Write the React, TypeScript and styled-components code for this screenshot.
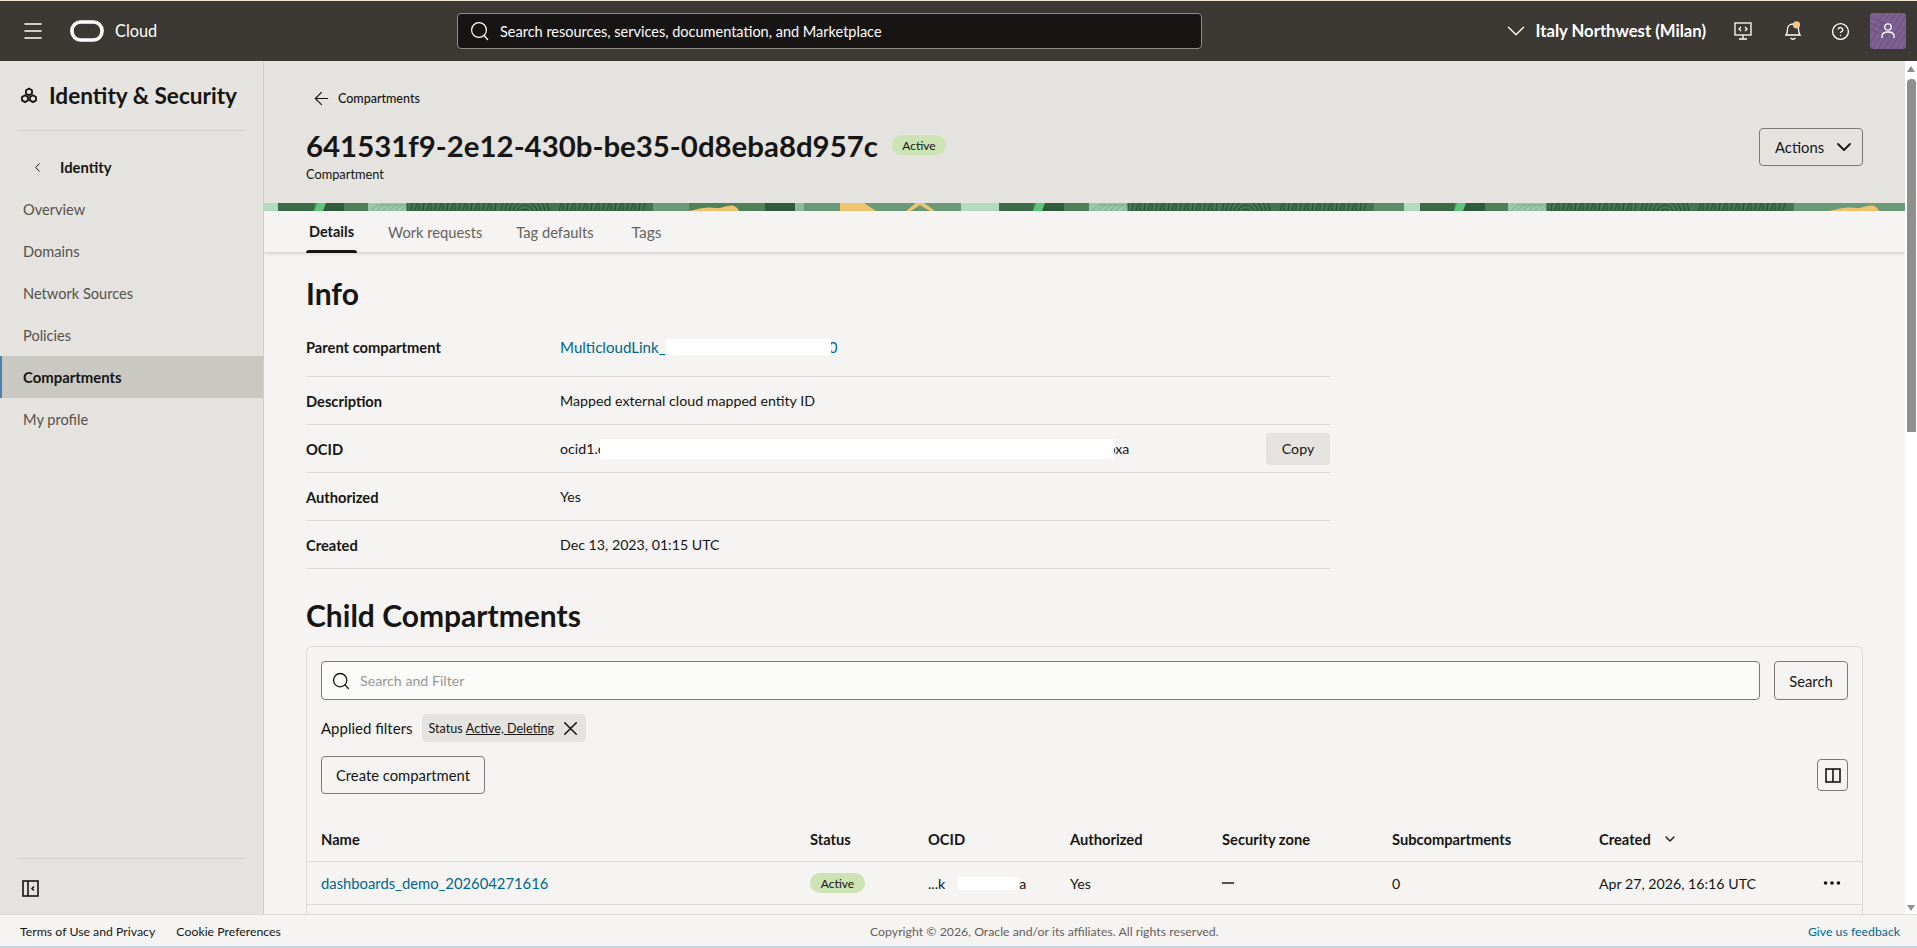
import styled, { createGlobalStyle } from 'styled-components'
import { ArrowLeft, ChevronDown, ChevronLeft, CircleHelp, Ellipsis, Menu, Search, X } from 'lucide-react'

const GlobalStyle = createGlobalStyle`
  * {
    margin: 0;
    padding: 0;
    box-sizing: border-box;
  }

  html, body {
    height: 100%;
    overflow: hidden;
  }

  body {
    background-color: #f5f4f2;
    color: #161513;
    font-family: 'Lato', 'Noto Sans', sans-serif;
    font-size: 14.2px;
  }
`

const Page = styled.div`
  height: 100vh;
  display: flex;
  flex-direction: column;
  border-top: 1px solid #efe6d2;
  border-bottom: 2px solid #c4d4dc;
`

const Header = styled.header`
  height: 60px;
  flex: none;
  display: flex;
  align-items: center;
  background-color: #3c3833;
  color: #fff;
`

const MenuButton = styled.div`
  width: 24px;
  margin-left: 21px;
  display: flex;
`

const Logo = styled.svg`
  width: 34px;
  height: 22px;
  margin-left: 25px;
`

const CloudLabel = styled.span`
  margin: 0 0 2px 11px;
  font-size: 16.3px;
  width: 342px;
`

const SearchBox = styled.div`
  width: 745px;
  height: 36px;
  display: flex;
  align-items: center;
  gap: 10px;
  padding-left: 12px;
  background-color: #161513;
  border: 1px solid #8f8c87;
  border-radius: 4px;
  font-size: 14.5px;
`

const HeaderRight = styled.div`
  margin-left: auto;
  display: flex;
  align-items: center;
`

const Region = styled.div`
  display: flex;
  align-items: center;
  gap: 5px;
  font-size: 16.7px;
  font-weight: 700;
  margin-right: 28px;
`

const HeaderIcon = styled.div<{ $gap: number }>`
  display: flex;
  margin-right: ${props => props.$gap}px;
`

const Avatar = styled.div`
  width: 36px;
  height: 36px;
  margin-right: 11px;
  border-radius: 3px;
  overflow: hidden;
  display: flex;
`

const Body = styled.div`
  flex: 1;
  min-height: 0;
  display: flex;
`

const Sidebar = styled.aside`
  width: 264px;
  flex: none;
  display: flex;
  flex-direction: column;
  background-color: #e4e3df;
  border-right: 1px solid #cfcdc8;
`

const SideTitle = styled.div`
  height: 70px;
  margin: 0 18px;
  display: flex;
  align-items: center;
  gap: 11px;
  padding-left: 2px;
  border-bottom: 1px solid #cfcdc8;
  font-size: 22.6px;
  font-weight: 700;
`

const SideBack = styled.div`
  height: 42px;
  margin-top: 15px;
  display: flex;
  align-items: center;
  gap: 15px;
  padding-left: 30px;
  font-size: 14.8px;
  font-weight: 700;
`

const NavItem = styled.div<{ $active?: boolean }>`
  height: 42px;
  display: flex;
  align-items: center;
  padding-left: ${props => props.$active ? 21 : 23}px;
  color: ${props => props.$active ? '#161513' : '#55514c'};
  font-size: ${props => props.$active ? 14.9 : 14.6}px;
  font-weight: ${props => props.$active ? 700 : 400};
  background-color: ${props => props.$active ? '#cac8c3' : 'transparent'};
  border-left: ${props => props.$active ? '2px solid #4f7fa8' : 'none'};
`

const SideBottom = styled.div`
  margin: auto 18px 0;
  height: 56px;
  padding: 21px 0 0 4px;
  border-top: 1px solid #cfcdc8;
  display: flex;
  align-items: flex-start;
`

const Main = styled.main`
  flex: 1;
  min-width: 0;
  display: flex;
  flex-direction: column;
  overflow: hidden;
`

const TitleArea = styled.div`
  height: 142px;
  flex: none;
  display: flex;
  justify-content: space-between;
  padding: 27px 42px 0;
  background-color: #e4e3df;
`

const BackLink = styled.div`
  height: 20px;
  display: flex;
  align-items: center;
  gap: 6px;
  margin-left: 5px;
  font-size: 12.5px;
  font-weight: 500;
`

const TitleRow = styled.div`
  height: 40px;
  margin-top: 17px;
  margin-bottom: 1px;
  display: flex;
  align-items: center;
  gap: 14px;
`

const PageTitle = styled.h1`
  font-size: 29.4px;
  font-weight: 700;
`

const Subtitle = styled.div`
  height: 16px;
  line-height: 16px;
  font-size: 12.8px;
`

const Badge = styled.span<{ $w: number }>`
  width: ${props => props.$w}px;
  height: 20px;
  display: flex;
  align-items: center;
  justify-content: center;
  background-color: #cce3b4;
  border-radius: 10px;
  font-size: 12px;
`

const Button = styled.button`
  display: flex;
  align-items: center;
  justify-content: center;
  background: transparent;
  border: 1px solid #7c7a76;
  border-radius: 4px;
  font-family: inherit;
  font-size: 14.8px;
  color: #161513;
`

const ActionsButton = styled(Button)`
  width: 104px;
  height: 38px;
  margin-top: 40px;
  justify-content: flex-start;
  gap: 8px;
  padding-left: 15px;
`

const Banner = styled.svg`
  display: block;
  width: 100%;
  height: 8px;
  flex: none;
`

const Tabs = styled.nav`
  height: 42px;
  flex: none;
  display: flex;
  gap: 28px;
  padding-left: 42px;
  border-bottom: 1px solid #dcdad6;
  box-shadow: 0 1px 3px rgba(0, 0, 0, 0.12);
  background-color: #f5f4f2;
`

const Tab = styled.div<{ $active?: boolean }>`
  position: relative;
  padding: 0 3px;
  display: flex;
  align-items: center;
  font-size: ${props => props.$active ? 14.5 : 14.7}px;
  color: ${props => props.$active ? '#161513' : '#65615c'};
  font-weight: ${props => props.$active ? 700 : 400};

  &:last-child {
    margin-left: 4px;
    font-size: 15.5px;
  }

  &::after {
    content: '';
    display: ${props => props.$active ? 'block' : 'none'};
    position: absolute;
    left: 0;
    right: 0;
    bottom: -1px;
    height: 3px;
    background-color: #161513;
    border-radius: 3px 3px 0 0;
  }
`

const Content = styled.div`
  flex: 1;
  min-height: 0;
  overflow: hidden;
  padding: 20px 42px 0;
`

const SectionTitle = styled.h2`
  height: 40px;
  line-height: 40px;
  font-size: 30px;
  font-weight: 700;
`

const InfoList = styled.div`
  width: 1024px;
  margin-top: 16px;
`

const InfoRow = styled.div`
  height: 48px;
  display: flex;
  align-items: center;
  border-bottom: 1px solid #dcdad6;

  &:first-child {
    padding-bottom: 11px;
  }
`

const InfoLabel = styled.div`
  width: 254px;
  flex: none;
  font-size: 14.7px;
  font-weight: 700;
`

const InfoValue = styled.div`
  display: flex;
  align-items: center;
  flex: 1;
`

const Link = styled.span`
  color: #00688c;
  font-size: 15.1px;
`

const RowLink = styled(Link)`
  font-size: 14.8px;
`

// covers what was blanked out in the screenshot, so it sits a little over its neighbours
const RedactBar = styled.span<{ $w: number; $h: number; $before?: number; $after?: number }>`
  position: relative;
  display: inline-block;
  width: ${props => props.$w}px;
  height: ${props => props.$h}px;
  margin-left: ${props => props.$before || 0}px;
  margin-right: ${props => props.$after || 0}px;
  background-color: #fff;
`

const CopyButton = styled.div`
  width: 64px;
  height: 32px;
  margin-left: auto;
  display: flex;
  align-items: center;
  justify-content: center;
  background-color: #e4e3df;
  border-radius: 4px;
`

const ChildTitle = styled(SectionTitle)`
  margin-top: 26px;
`

const Card = styled.section`
  margin-top: 11px;
  border: 1px solid #dcdad6;
  border-bottom: none;
  border-radius: 6px 6px 0 0;
`

const CardTop = styled.div`
  display: flex;
  flex-direction: column;
  gap: 14px;
  padding: 14px 14px 0;
`

const SearchRow = styled.div`
  display: flex;
  gap: 14px;
`

const FilterInput = styled.div`
  flex: 1;
  height: 39px;
  display: flex;
  align-items: center;
  gap: 9px;
  padding-left: 9px;
  color: #9a9793;
  background-color: #fbfbfa;
  border: 1px solid #7c7a76;
  border-radius: 4px;
`

const SearchButton = styled(Button)`
  width: 74px;
  height: 39px;
`

const FilterRow = styled.div`
  height: 28px;
  display: flex;
  align-items: center;
  gap: 9px;
  font-size: 15px;
`

const FilterLabel = styled.span`
  margin-bottom: 1px;
`

const Chip = styled.div`
  height: 28px;
  width: 164px;
  display: flex;
  align-items: center;
  gap: 3px;
  padding-left: 7px;
  background-color: #e4e3df;
  border-radius: 4px;
  font-size: 12.6px;
`

const ChipValue = styled.span`
  text-decoration: underline;
`

const ChipClose = styled.span`
  margin-left: auto;
  margin-right: 4px;
  display: flex;
`

const ToolRow = styled.div`
  display: flex;
  align-items: center;
  justify-content: space-between;
`

const CreateButton = styled(Button)`
  width: 164px;
  height: 38px;
`

const ColumnsButton = styled(Button)`
  width: 31px;
  height: 32px;
`

const TableRow = styled.div`
  display: grid;
  grid-template-columns: 489px 118px 142px 152px 170px 207px 222px 1fr;
  align-items: center;
  height: 43px;
  padding-left: 14px;
  border-bottom: 1px solid #dcdad6;
`

const TableHead = styled(TableRow)`
  height: 45px;
  margin-top: 23px;
  font-size: 14.7px;
  font-weight: 700;
`

const SortCell = styled.div`
  display: flex;
  align-items: center;
  gap: 11px;
`

const OcidCell = styled.div`
  display: flex;
  align-items: center;
`

const Dash = styled.div`
  width: 12px;
  height: 2px;
  background-color: #55514c;
`

const DotsCell = styled.div`
  display: flex;
`

const Scrollbar = styled.div`
  width: 12px;
  flex: none;
  display: flex;
  flex-direction: column;
  align-items: center;
  background-color: #fff;
  padding-top: 5px;
`

const ScrollArrow = styled.div<{ $down?: boolean }>`
  width: 0;
  height: 0;
  border-left: 4px solid transparent;
  border-right: 4px solid transparent;
  border-bottom: ${props => props.$down ? 'none' : '6px solid #8f8f8f'};
  border-top: ${props => props.$down ? '6px solid #8f8f8f' : 'none'};
  margin-top: ${props => props.$down ? 'auto' : 0};
  margin-bottom: ${props => props.$down ? '3px' : 0};
`

const ScrollThumb = styled.div`
  width: 9px;
  height: 353px;
  margin-top: 7px;
  background-color: #8f8f8f;
  border-radius: 4px 4px 0 0;
`

const Footer = styled.footer`
  height: 32px;
  flex: none;
  display: flex;
  align-items: center;
  padding: 1px 17px 0 20px;
  background-color: #f5f4f2;
  border-top: 1px solid #dcdad6;
  font-size: 12.3px;
`

const FooterLinks = styled.div`
  display: flex;
  gap: 21px;
  width: 850px;
`

const Copyright = styled.div`
  color: #65615c;
`

const Feedback = styled.span`
  margin-left: auto;
  color: #00688c;
`

// green band under the title: hand placed pieces, x is from the left edge of the main column
const bandPieces: [number, number, string][] = [
  [0, 1641, '#4f8059'],
  [0, 14, '#b4dabf'],
  [14, 36, '#3c6b48'],
  [59, 21, '#2f5a3c'],
  [80, 24, '#4d7f59'],
  [389, 36, '#6b9a78'],
  [501, 30, '#2f5a3c'],
  [531, 9, '#8dbb9b'],
  [540, 157, '#6b9a78'],
  [697, 38, '#b4dabf'],
  [735, 34, '#3c6b48'],
  [778, 22, '#2f5a3c'],
  [800, 24, '#4d7f59'],
  [1110, 30, '#5d8e6a'],
  [1140, 16, '#b4dabf'],
  [1156, 34, '#3c6b48'],
  [1199, 22, '#2f5a3c'],
  [1221, 23, '#4d7f59'],
  [1530, 111, '#6b9a78'],
]

const stripes = [50, 769, 1190]
const prints = [143, 864, 1283]

function Fingerprint({ x }: { x: number }) {
  const lines = Array.from({ length: 60 }, (_, i) => i * 4)
  return (
    <g>
      <rect x={x - 39} width={39} height={8} fill="#9cc7a8" />
      {[0, 6, 12, 18, 24, 30].map(d => (
        <path key={d} d={`M${x - 36 + d} 8 Q${x - 30 + d} 0 ${x - 22 + d} 2`} stroke="#6f9f7e" fill="none" strokeWidth="0.7" />
      ))}
      <rect x={x} width={246} height={8} fill="#44744f" />
      {lines.map(l => (
        <path
          key={l}
          d={`M${x + l} 8 L${x + l + (l % 12) / 4} 0`}
          stroke="#23482f"
          strokeWidth="1"
          opacity={l > 90 && l < 150 ? 0 : 0.85}
        />
      ))}
      {[4, 8, 12, 16, 20, 24].map(r => (
        <circle key={r} cx={x + 118} cy={10} r={r} stroke="#23482f" fill="none" strokeWidth="1" />
      ))}
    </g>
  )
}

function BandArt() {
  return (
    <Banner viewBox="0 0 1641 8" preserveAspectRatio="none">
      {bandPieces.map(([x, w, c]) => <rect key={x} x={x} width={w} height={8} fill={c} />)}
      {stripes.map(x => <polygon key={x} points={`${x + 3},0 ${x + 12},0 ${x + 9},8 ${x},8`} fill="#5ec47c" />)}
      {prints.map(x => <Fingerprint key={x} x={x} />)}
      <path d="M425 8 C440 4 446 4 452 5 C458 6 464 1 470 3 C473 4 474 6 475 8 Z" fill="#f0c572" />
      <polygon points="576,0 600,0 612,8 576,8" fill="#f0c572" />
      <path d="M642 8 L652 0 L660 0 L671 8 L666 8 L656 2 L647 8 Z" fill="#f0c572" />
      <path d="M1565 8 C1580 4 1586 4 1592 5 C1598 6 1604 1 1610 3 C1613 4 1614 6 1615 8 Z" fill="#f0c572" />
    </Banner>
  )
}

function AvatarArt() {
  return (
    <svg width="36" height="36" viewBox="0 0 36 36">
      <rect width="36" height="36" fill="#7e6191" />
      {[0, 6, 12, 18, 24, 30, 36, 42].map(d => (
        <path key={d} d={`M${d - 10} 36 L${d + 14} 0`} stroke="#68507a" strokeWidth="1" />
      ))}
      {[4, 10, 16].map(d => (
        <path key={d} d={`M0 ${d} L18 ${d + 8}`} stroke="#68507a" strokeWidth="1" />
      ))}
      <circle cx="18" cy="14" r="3.2" fill="none" stroke="#fff" strokeWidth="1.3" />
      <path d="M12 25 V23 C12 20 15 19 18 19 C21 19 24 20 24 23 V25" fill="none" stroke="#fff" strokeWidth="1.3" />
    </svg>
  )
}

function App() {
  return (
    <>
      <GlobalStyle />
      <Page>
        <Header>
          <MenuButton><Menu size={24} strokeWidth={1.6} /></MenuButton>
          <Logo viewBox="0 0 34 22">
            <rect x="2" y="2" width="30" height="18" rx="8.5" fill="none" stroke="#fff" strokeWidth="3.6" />
          </Logo>
          <CloudLabel>Cloud</CloudLabel>
          <SearchBox>
            <svg width="20" height="20" viewBox="0 0 20 20" fill="none" stroke="#fff" strokeWidth="1.2">
              <circle cx="9" cy="9" r="7.4" />
              <path d="M14.2 14.5 L18 19" />
            </svg>
            Search resources, services, documentation, and Marketplace
          </SearchBox>
          <HeaderRight>
            <Region>
              <ChevronDown size={30} strokeWidth={1.1} />
              Italy Northwest (Milan)
            </Region>
            <HeaderIcon $gap={32}>
              <svg width="18" height="18" viewBox="0 0 18 18" fill="none" stroke="#fff" strokeWidth="1.3">
                <rect x="1" y="1" width="16" height="12" />
                <path d="M9 13 V16.5 M5 17 H13" />
                <path d="M7 5 L5 7 L7 9 M11 5 L13 7 L11 9" />
              </svg>
            </HeaderIcon>
            <HeaderIcon $gap={29}>
              <svg width="18" height="20" viewBox="0 0 18 20" fill="none" stroke="#fff" strokeWidth="1.3">
                <path d="M2 14 C3.5 12 3.5 10 3.5 8 C3.5 5 6 3 9 3 C12 3 14.5 5 14.5 8 C14.5 10 14.5 12 16 14 Z" />
                <path d="M6.5 17 C8 18.5 10 18.5 11.5 17" />
                <circle cx="12.5" cy="3.8" r="3.6" fill="#f0c98a" stroke="none" />
              </svg>
            </HeaderIcon>
            <HeaderIcon $gap={20}><CircleHelp size={19} strokeWidth={1.7} /></HeaderIcon>
            <Avatar><AvatarArt /></Avatar>
          </HeaderRight>
        </Header>

        <Body>
          <Sidebar>
            <SideTitle>
              <svg width="18" height="18" viewBox="0 0 18 18" fill="none" stroke="#161513" strokeWidth="1.8" strokeLinejoin="round">
                <path d="M9 1.5 L12 3.2 V6.6 L9 8.3 L6 6.6 V3.2 Z" />
                <path d="M5 8.3 L8 10 V13.4 L5 15.1 L2 13.4 V10 Z" />
                <path d="M13 8.3 L16 10 V13.4 L13 15.1 L10 13.4 V10 Z" />
              </svg>
              Identity &amp; Security
            </SideTitle>
            <SideBack>
              <ChevronLeft size={15} strokeWidth={1.6} />
              Identity
            </SideBack>
            <NavItem>Overview</NavItem>
            <NavItem>Domains</NavItem>
            <NavItem>Network Sources</NavItem>
            <NavItem>Policies</NavItem>
            <NavItem $active>Compartments</NavItem>
            <NavItem>My profile</NavItem>
            <SideBottom>
              <svg width="17" height="17" viewBox="0 0 17 17" fill="none" stroke="#161513" strokeWidth="1.6">
                <rect x="1" y="1" width="15" height="15" />
                <path d="M6 1 V16" />
                <path d="M12 6.5 L10 8.5 L12 10.5" />
              </svg>
            </SideBottom>
          </Sidebar>

          <Main>
            <TitleArea>
              <div>
                <BackLink>
                  <ArrowLeft size={21} strokeWidth={1.3} />
                  Compartments
                </BackLink>
                <TitleRow>
                  <PageTitle>641531f9-2e12-430b-be35-0d8eba8d957c</PageTitle>
                  <Badge $w={54}>Active</Badge>
                </TitleRow>
                <Subtitle>Compartment</Subtitle>
              </div>
              <ActionsButton>
                Actions
                <ChevronDown size={24} strokeWidth={1.8} />
              </ActionsButton>
            </TitleArea>
            <BandArt />
            <Tabs>
              <Tab $active>Details</Tab>
              <Tab>Work requests</Tab>
              <Tab>Tag defaults</Tab>
              <Tab>Tags</Tab>
            </Tabs>
            <Content>
              <SectionTitle>Info</SectionTitle>
              <InfoList>
                <InfoRow>
                  <InfoLabel>Parent compartment</InfoLabel>
                  <InfoValue>
                    <Link>MulticloudLink_</Link>
                    <RedactBar $w={165} $h={16} $after={-2} />
                    <Link>0</Link>
                  </InfoValue>
                </InfoRow>
                <InfoRow>
                  <InfoLabel>Description</InfoLabel>
                  <InfoValue>Mapped external cloud mapped entity ID</InfoValue>
                </InfoRow>
                <InfoRow>
                  <InfoLabel>OCID</InfoLabel>
                  <InfoValue>
                    ocid1.c
                    <RedactBar $w={514} $h={20} $before={-5} $after={-6} />
                    oxa
                    <CopyButton>Copy</CopyButton>
                  </InfoValue>
                </InfoRow>
                <InfoRow>
                  <InfoLabel>Authorized</InfoLabel>
                  <InfoValue>Yes</InfoValue>
                </InfoRow>
                <InfoRow>
                  <InfoLabel>Created</InfoLabel>
                  <InfoValue>Dec 13, 2023, 01:15 UTC</InfoValue>
                </InfoRow>
              </InfoList>

              <ChildTitle>Child Compartments</ChildTitle>
              <Card>
                <CardTop>
                  <SearchRow>
                    <FilterInput>
                      <Search size={20} color="#161513" strokeWidth={1.6} />
                      Search and Filter
                    </FilterInput>
                    <SearchButton>Search</SearchButton>
                  </SearchRow>
                  <FilterRow>
                    <FilterLabel>Applied filters</FilterLabel>
                    <Chip>
                      Status <ChipValue>Active, Deleting</ChipValue>
                      <ChipClose><X size={23} strokeWidth={1.6} /></ChipClose>
                    </Chip>
                  </FilterRow>
                  <ToolRow>
                    <CreateButton>Create compartment</CreateButton>
                    <ColumnsButton>
                      <svg width="16" height="15" viewBox="0 0 16 15" fill="none" stroke="#161513" strokeWidth="1.6">
                        <rect x="1" y="1" width="14" height="13" />
                        <path d="M8 1 V14" />
                      </svg>
                    </ColumnsButton>
                  </ToolRow>
                </CardTop>
                <TableHead>
                  <div>Name</div>
                  <div>Status</div>
                  <div>OCID</div>
                  <div>Authorized</div>
                  <div>Security zone</div>
                  <div>Subcompartments</div>
                  <SortCell>Created <ChevronDown size={16} strokeWidth={2} /></SortCell>
                  <div />
                </TableHead>
                <TableRow>
                  <RowLink>dashboards_demo_202604271616</RowLink>
                  <Badge $w={55}>Active</Badge>
                  <OcidCell>...k<RedactBar $w={61} $h={13} $before={13} />a</OcidCell>
                  <div>Yes</div>
                  <Dash />
                  <div>0</div>
                  <div>Apr 27, 2026, 16:16 UTC</div>
                  <DotsCell><Ellipsis size={22} strokeWidth={2} /></DotsCell>
                </TableRow>
                <TableRow />
              </Card>
            </Content>
          </Main>

          <Scrollbar>
            <ScrollArrow />
            <ScrollThumb />
            <ScrollArrow $down />
          </Scrollbar>
        </Body>

        <Footer>
          <FooterLinks>
            <span>Terms of Use and Privacy</span>
            <span>Cookie Preferences</span>
          </FooterLinks>
          <Copyright>Copyright © 2026, Oracle and/or its affiliates. All rights reserved.</Copyright>
          <Feedback>Give us feedback</Feedback>
        </Footer>
      </Page>
    </>
  )
}

export default App
